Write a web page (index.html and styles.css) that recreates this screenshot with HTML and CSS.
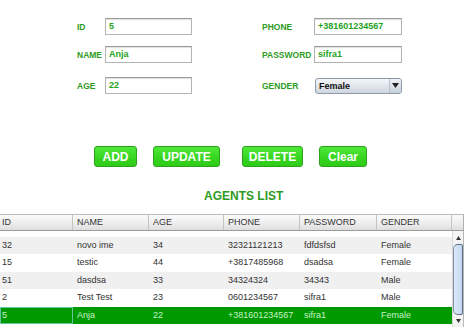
FILE: index.html
```html
<!DOCTYPE html>
<html>
<head>
<meta charset="utf-8">
<link rel="stylesheet" href="styles.css">
</head>
<body>
<div class="page">
  <div class="form">
    <div class="group left">
      <div class="row r1"><span class="lbl lw-left">ID</span><div class="field fw-left">5</div></div>
      <div class="row r2"><span class="lbl lw-left">NAME</span><div class="field fw-left">Anja</div></div>
      <div class="row r3"><span class="lbl lw-left">AGE</span><div class="field fw-left">22</div></div>
    </div>
    <div class="group right">
      <div class="row r1"><span class="lbl lw-right">PHONE</span><div class="field fw-right">+381601234567</div></div>
      <div class="row r2"><span class="lbl lw-right">PASSWORD</span><div class="field fw-right">sifra1</div></div>
      <div class="row r3"><span class="lbl lw-right">GENDER</span>
        <div class="combo"><span class="combo-text">Female</span><span class="combo-btn"><svg width="7" height="5" viewBox="0 0 7 5"><path d="M0 0 L7 0 L3.5 5 Z" fill="#222"/></svg></span></div>
      </div>
    </div>
  </div>

  <div class="buttons">
    <button class="btn b-add">ADD</button>
    <button class="btn b-update">UPDATE</button>
    <button class="btn b-delete">DELETE</button>
    <button class="btn b-clear">Clear</button>
  </div>

  <div class="title">AGENTS LIST</div>

  <div class="table">
    <div class="thead">
      <div class="th">ID</div>
      <div class="th">NAME</div>
      <div class="th">AGE</div>
      <div class="th">PHONE</div>
      <div class="th">PASSWORD</div>
      <div class="th">GENDER</div>
      <div class="th corner"></div>
    </div>
    <div class="tbody">
      <div class="rows">
        <div class="spacer"></div>
        <div class="tr alt"><div class="td">32</div><div class="td">novo ime</div><div class="td">34</div><div class="td">32321121213</div><div class="td">fdfdsfsd</div><div class="td">Female</div></div>
        <div class="tr"><div class="td">15</div><div class="td">testic</div><div class="td">44</div><div class="td">+3817485968</div><div class="td">dsadsa</div><div class="td">Female</div></div>
        <div class="tr alt"><div class="td">51</div><div class="td">dasdsa</div><div class="td">33</div><div class="td">34324324</div><div class="td">34343</div><div class="td">Male</div></div>
        <div class="tr"><div class="td">2</div><div class="td">Test Test</div><div class="td">23</div><div class="td">0601234567</div><div class="td">sifra1</div><div class="td">Male</div></div>
        <div class="tr sel"><div class="td focus">5</div><div class="td">Anja</div><div class="td">22</div><div class="td">+381601234567</div><div class="td">sifra1</div><div class="td">Female</div></div>
      </div>
      <div class="scrollbar">
        <div class="arrow up"><svg width="5" height="4" viewBox="0 0 5 4"><path d="M0 4 L5 4 L2.5 0 Z" fill="#333"/></svg></div>
        <div class="track"><div class="thumb"></div></div>
        <div class="arrow down"><svg width="5" height="4" viewBox="0 0 5 4"><path d="M0 0 L5 0 L2.5 4 Z" fill="#333"/></svg></div>
      </div>
    </div>
  </div>
</div>
</body>
</html>
```

FILE: styles.css
```css
html, body {
  margin: 0;
  padding: 0;
  background: #ffffff;
}
body {
  width: 474px;
  height: 327px;
  overflow: hidden;
  font-family: "Liberation Sans", Arial, sans-serif;
}
.page {
  display: flex;
  flex-direction: column;
}
.form {
  display: flex;
  padding-top: 18px;
  padding-left: 77px;
  gap: 70px;
}
.group {
  display: flex;
  flex-direction: column;
}
.row {
  display: flex;
  align-items: center;
  height: 17px;
}
.r2 { margin-top: 11px; }
.r3 { margin-top: 14px; }
.lbl {
  color: #2f9b1f;
  font-weight: bold;
  font-size: 8.5px;
}
.lw-left { width: 28px; }
.lw-right { width: 52px; }
.field {
  box-sizing: border-box;
  height: 17px;
  border: 1px solid #b4b4b4;
  border-top-color: #9a9a9a;
  box-shadow: inset 0 1px 1px #e0e0e0;
  background: #fff;
  color: #23a31e;
  font-weight: bold;
  font-size: 9px;
  padding-left: 3px;
  line-height: 15px;
}
.fw-left { width: 87px; }
.fw-right { width: 88px; }
.combo {
  box-sizing: border-box;
  width: 87px;
  height: 16px;
  margin-left: 1px;
  border: 1px solid #8e9aa8;
  border-radius: 3px;
  background: linear-gradient(#f4f6f8, #dfe4ea 55%, #cfd6de);
  display: flex;
  align-items: center;
  justify-content: space-between;
}
.combo-text {
  font-weight: bold;
  font-size: 9px;
  color: #111;
  padding-left: 3px;
}
.combo-btn {
  width: 11px;
  height: 14px;
  border-left: 1px solid #b8c2cc;
  display: flex;
  align-items: center;
  justify-content: center;
  background: linear-gradient(#eef1f5, #c6d0db);
  border-radius: 0 2px 2px 0;
}
.buttons {
  display: flex;
  padding-left: 94px;
  margin-top: 52px;
}
.btn {
  box-sizing: border-box;
  height: 21px;
  border: 1px solid #2aa31a;
  border-radius: 3px;
  background: linear-gradient(#4fe83a, #36d41f 60%, #2fcb18);
  color: #ffffff;
  font-family: "Liberation Sans", Arial, sans-serif;
  font-weight: bold;
  font-size: 12px;
  padding: 0;
}
.b-add { width: 43px; }
.b-update { width: 67px; margin-left: 16px; }
.b-delete { width: 61px; margin-left: 22px; }
.b-clear { width: 48px; margin-left: 16px; }
.title {
  margin-top: 22px;
  padding-left: 204px;
  color: #2f9b1f;
  font-weight: bold;
  font-size: 12px;
  height: 15px;
  line-height: 15px;
}
.table {
  margin-top: 10px;
  width: 464px;
}
.thead {
  display: grid;
  grid-template-columns: 73px 76px 75px 76px 77px 75px 12px;
  height: 17px;
  box-sizing: border-box;
  border-top: 1px solid #b9b9b9;
  border-bottom: 1px solid #9c9c9c;
  background: linear-gradient(#fbfbfb, #ececec 60%, #dedede);
}
.th {
  border-right: 1px solid #c4c4c4;
  font-size: 9px;
  color: #333;
  padding-left: 2px;
  line-height: 15px;
}
.th + .th { padding-left: 4px; }
.th.corner { padding-left: 0; border-right: 1px solid #b0b0b0; }
.tbody {
  display: flex;
  height: 96px;
  overflow: hidden;
}
.rows {
  width: 452px;
}
.spacer { height: 6px; }
.tr {
  display: grid;
  grid-template-columns: 73px 76px 75px 76px 77px 75px;
  height: 17.4px;
  background: #ffffff;
  font-size: 9px;
  color: #333;
}
.tr.alt { background: #f0f0f0; }
.td {
  line-height: 17.4px;
  padding-left: 2px;
  box-sizing: border-box;
}
.td + .td { padding-left: 4px; }
.tr.sel {
  background: #009a00;
  color: #c9f0c9;
}
.td.focus {
  border: 1px solid #63c5a0;
  line-height: 15.4px;
  padding-left: 1px;
}
.scrollbar {
  width: 12px;
  box-sizing: border-box;
  border-left: 1px solid #d8d8d8;
  border-right: 1px solid #b8b8b8;
  background: #f4f4f4;
  display: flex;
  flex-direction: column;
  height: 96px;
}
.arrow {
  height: 10px;
  display: flex;
  align-items: center;
  justify-content: center;
}
.arrow.up { margin-top: 2px; }
.track {
  flex: 1;
  display: flex;
  flex-direction: column;
  padding: 1px 0;
}
.thumb {
  flex: 1;
  border: 1px solid #5a6f86;
  border-left-color: #7f92a6;
  border-radius: 5px 2px 2px 5px;
  background: linear-gradient(90deg, #dce9f6, #c2d8ee);
}
.arrow.down { margin-bottom: 1px; }
```
